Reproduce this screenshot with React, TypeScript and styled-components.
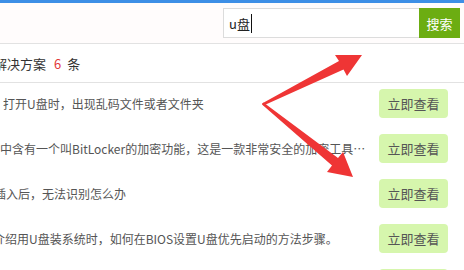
import React from 'react';
import styled, { createGlobalStyle } from 'styled-components';

const GlobalStyle = createGlobalStyle`
	html, body {
		margin: 0;
		padding: 0;
		background: #fff;
	}
	body {
		font-family: 'Noto Sans CJK SC', 'Noto Sans', sans-serif;
	}
`;

interface Item {
	text: string;
	offset: number;
}

const items: Item[] = [
	{ text: '打开U盘时，出现乱码文件或者文件夹', offset: 3 },
	{ text: '中含有一个叫BitLocker的加密功能，这是一款非常安全的加密工具，可以对U盘进行加密保护', offset: 0 },
	{ text: '插入后，无法识别怎么办', offset: -6 },
	{ text: '介绍用U盘装系统时，如何在BIOS设置U盘优先启动的方法步骤。', offset: -7 },
	{ text: 'U盘文件无法删除怎么办', offset: 0 },
];

const Page = styled.div`
	position: relative;
	width: 464px;
	height: 270px;
	overflow: hidden;
	background: #fff;
	border-top: 3px solid #3d8fe6;
	box-sizing: border-box;
`;

const Header = styled.header`
	display: flex;
	justify-content: flex-end;
	align-items: center;
	height: 40px;
	padding-right: 4px;
	background: #fffcfc;
	border-bottom: 1px solid #e2e2e2;
`;

const SearchBox = styled.div`
	display: flex;
	height: 30px;
`;

const Input = styled.div`
	display: flex;
	align-items: center;
	width: 196px;
	box-sizing: border-box;
	padding-left: 5px;
	border: 1px solid #dcdcdc;
	border-right: none;
	background: #fff;
	font-size: 13px;
	color: #222;
`;

const Caret = styled.span`
	display: inline-block;
	width: 1px;
	height: 19px;
	margin-left: 1px;
	background: #111;
`;

const SearchButton = styled.div`
	display: flex;
	align-items: center;
	justify-content: center;
	width: 41px;
	background: #6cad12;
	color: #fff;
	font-size: 13px;
`;

const TitleBar = styled.div`
	display: flex;
	align-items: center;
	height: 38px;
	border-bottom: 1px solid #e2e2e2;
	font-size: 13px;
	color: #333;
	white-space: nowrap;
`;

const TitleText = styled.span`
	margin-left: -6px;
`;

const Count = styled.span`
	color: #e23b3b;
	margin: 0 6px 0 8px;
`;

const List = styled.div`
	display: flex;
	flex-direction: column;
	gap: 16px;
	padding: 6px 16px 0 0;
`;

const Row = styled.div`
	display: flex;
	align-items: center;
	height: 29px;
	gap: 3px;
`;

const RowText = styled.div<{ $offset: number }>`
	flex: 1;
	min-width: 0;
	margin-left: ${p => p.$offset}px;
	font-size: 12px;
	color: #555;
	white-space: nowrap;
	overflow: hidden;
	text-overflow: ellipsis;
`;

const ViewButton = styled.div`
	display: flex;
	align-items: center;
	justify-content: center;
	flex-shrink: 0;
	width: 69px;
	height: 29px;
	border-radius: 4px;
	background: #d6f6ad;
	color: #555;
	font-size: 13px;
`;

const Arrows = styled.svg`
	position: absolute;
	top: 0;
	left: 0;
	pointer-events: none;
`;

export default function App() {
	return (
		<>
			<GlobalStyle />
			<Page>
				<Header>
					<SearchBox>
						<Input>u盘<Caret /></Input>
						<SearchButton>搜索</SearchButton>
					</SearchBox>
				</Header>

				<TitleBar>
					<TitleText>解决方案</TitleText>
					<Count>6</Count>
					<span>条</span>
				</TitleBar>

				<List>
					{items.map((item, i) => (
						<Row key={i}>
							<RowText $offset={item.offset}>{item.text}</RowText>
							<ViewButton>立即查看</ViewButton>
						</Row>
					))}
				</List>

				{/* red annotation arrows drawn over the page */}
				<Arrows width="464" height="270" viewBox="0 -3 464 270">
					<polygon
						fill="#ef3535"
						points="262,97.5 339,55 335,49 362,49 347,70 343.5,63.5 263.5,99.5"
					/>
					<polygon
						fill="#ef3535"
						points="263.5,96.5 338,152 343,146 353,171 327,166 332,159.5 262,98.5"
					/>
				</Arrows>
			</Page>
		</>
	);
}
